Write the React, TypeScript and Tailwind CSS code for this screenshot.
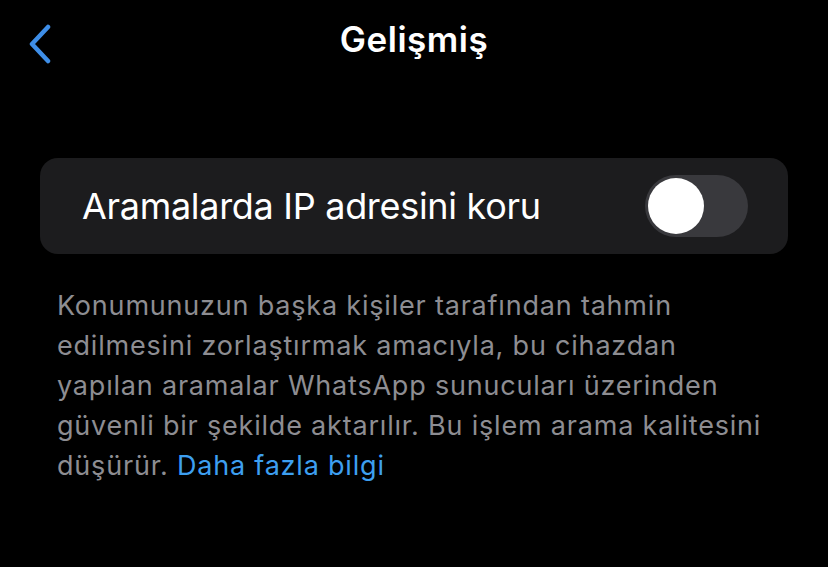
import React from "react";

export default function App() {
  return (
    <div
      className="w-[828px] h-[567px] bg-black overflow-hidden text-white"
      style={{ fontFamily: "Inter, 'Noto Sans', sans-serif" }}
    >
      <div className="relative h-[88px] flex items-center justify-center">
        <svg
          className="absolute left-[26px] top-[24px]"
          width="28"
          height="40"
          viewBox="0 0 28 40"
          fill="none"
        >
          <path
            d="M22 3 L6 20 L22 37"
            stroke="#3E8EE8"
            strokeWidth="4.5"
            strokeLinecap="round"
            strokeLinejoin="round"
          />
        </svg>
        <h1 className="text-[35px] font-semibold tracking-[0.5px] leading-none mt-[-10px]">
          Gelişmiş
        </h1>
      </div>
      <div className="mt-[70px] mx-[40px] h-[96px] rounded-[18px] bg-[#1c1c1e] flex items-center justify-between pl-[42px] pr-[40px]">
        <span className="text-[36px] tracking-[-0.3px] leading-none">Aramalarda IP adresini koru</span>
        <div className="w-[103px] h-[62px] rounded-full bg-[#39393d] p-[3px] flex items-center">
          <div className="w-[56px] h-[56px] rounded-full bg-white" />
        </div>
      </div>
      <p className="mt-[32px] ml-[57px] mr-[20px] text-[27px] leading-[40px] text-[#8d8d92] tracking-[0.8px]">
        Konumunuzun başka kişiler tarafından tahmin
        <br />
        edilmesini zorlaştırmak amacıyla, bu cihazdan
        <br />
        yapılan aramalar WhatsApp sunucuları üzerinden
        <br />
        güvenli bir şekilde aktarılır. Bu işlem arama kalitesini
        <br />
        düşürür. <span className="text-[#3d9ff0]">Daha fazla bilgi</span>
      </p>
    </div>
  );
}
